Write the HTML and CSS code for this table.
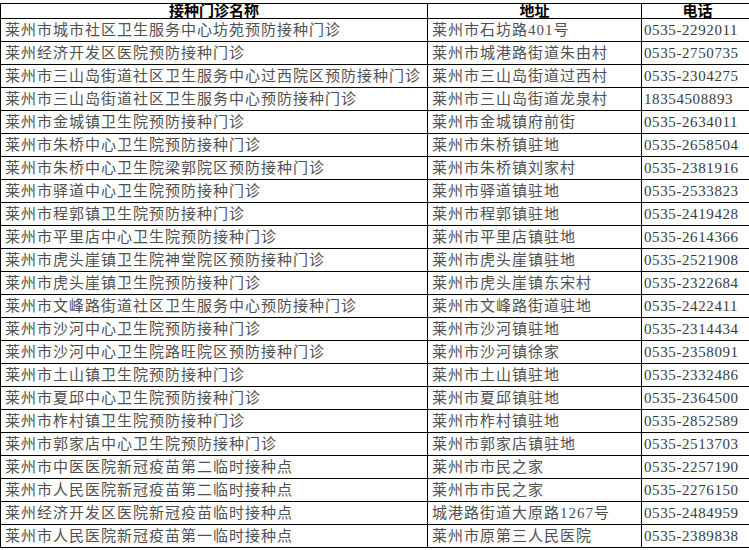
FILE: index.html
```html
<!DOCTYPE html>
<html lang="zh-CN">
<head>
<meta charset="utf-8">
<title>接种门诊</title>
<link rel="stylesheet" href="styles.css">
</head>
<body>
<table class="clinics">
<colgroup>
<col class="c-name">
<col class="c-addr">
<col class="c-tel">
</colgroup>
<thead>
<tr><th>接种门诊名称</th><th>地址</th><th>电话</th></tr>
</thead>
<tbody>
<tr><td>莱州市城市社区卫生服务中心坊苑预防接种门诊</td><td>莱州市石坊路401号</td><td>0535-2292011</td></tr>
<tr><td>莱州经济开发区医院预防接种门诊</td><td>莱州市城港路街道朱由村</td><td>0535-2750735</td></tr>
<tr><td>莱州市三山岛街道社区卫生服务中心过西院区预防接种门诊</td><td>莱州市三山岛街道过西村</td><td>0535-2304275</td></tr>
<tr><td>莱州市三山岛街道社区卫生服务中心预防接种门诊</td><td>莱州市三山岛街道龙泉村</td><td>18354508893</td></tr>
<tr><td>莱州市金城镇卫生院预防接种门诊</td><td>莱州市金城镇府前街</td><td>0535-2634011</td></tr>
<tr><td>莱州市朱桥中心卫生院预防接种门诊</td><td>莱州市朱桥镇驻地</td><td>0535-2658504</td></tr>
<tr><td>莱州市朱桥中心卫生院梁郭院区预防接种门诊</td><td>莱州市朱桥镇刘家村</td><td>0535-2381916</td></tr>
<tr><td>莱州市驿道中心卫生院预防接种门诊</td><td>莱州市驿道镇驻地</td><td>0535-2533823</td></tr>
<tr><td>莱州市程郭镇卫生院预防接种门诊</td><td>莱州市程郭镇驻地</td><td>0535-2419428</td></tr>
<tr><td>莱州市平里店中心卫生院预防接种门诊</td><td>莱州市平里店镇驻地</td><td>0535-2614366</td></tr>
<tr><td>莱州市虎头崖镇卫生院神堂院区预防接种门诊</td><td>莱州市虎头崖镇驻地</td><td>0535-2521908</td></tr>
<tr><td>莱州市虎头崖镇卫生院预防接种门诊</td><td>莱州市虎头崖镇东宋村</td><td>0535-2322684</td></tr>
<tr><td>莱州市文峰路街道社区卫生服务中心预防接种门诊</td><td>莱州市文峰路街道驻地</td><td>0535-2422411</td></tr>
<tr><td>莱州市沙河中心卫生院预防接种门诊</td><td>莱州市沙河镇驻地</td><td>0535-2314434</td></tr>
<tr><td>莱州市沙河中心卫生院路旺院区预防接种门诊</td><td>莱州市沙河镇徐家</td><td>0535-2358091</td></tr>
<tr><td>莱州市土山镇卫生院预防接种门诊</td><td>莱州市土山镇驻地</td><td>0535-2332486</td></tr>
<tr><td>莱州市夏邱中心卫生院预防接种门诊</td><td>莱州市夏邱镇驻地</td><td>0535-2364500</td></tr>
<tr><td>莱州市柞村镇卫生院预防接种门诊</td><td>莱州市柞村镇驻地</td><td>0535-2852589</td></tr>
<tr><td>莱州市郭家店中心卫生院预防接种门诊</td><td>莱州市郭家店镇驻地</td><td>0535-2513703</td></tr>
<tr><td>莱州市中医医院新冠疫苗第二临时接种点</td><td>莱州市市民之家</td><td>0535-2257190</td></tr>
<tr><td>莱州市人民医院新冠疫苗第二临时接种点</td><td>莱州市市民之家</td><td>0535-2276150</td></tr>
<tr><td>莱州经济开发区医院新冠疫苗临时接种点</td><td>城港路街道大原路1267号</td><td>0535-2484959</td></tr>
<tr><td>莱州市人民医院新冠疫苗第一临时接种点</td><td>莱州市原第三人民医院</td><td>0535-2389838</td></tr>
</tbody>
</table>
</body>
</html>
```

FILE: styles.css
```css
html, body {
  margin: 0;
  padding: 0;
  background: #ffffff;
}
body {
  padding-top: 3px;
  overflow: hidden;
}
.clinics {
  border-collapse: collapse;
  table-layout: fixed;
  width: 753px;
  font-family: "Liberation Serif", "Noto Sans CJK SC", serif;
  font-size: 15px;
  letter-spacing: 1px;
  color: #505050;
}
.c-name { width: 427px; }
.c-addr { width: 214px; }
.c-tel { width: 112px; }
.clinics th,
.clinics td {
  border: 1px solid #000;
  padding: 0 0 0 4px;
  white-space: nowrap;
  overflow: hidden;
  vertical-align: middle;
}
.clinics th {
  height: 14px;
  line-height: 14px;
  font-weight: bold;
  color: #000;
  text-align: center;
  letter-spacing: 0;
  padding: 0;
}
.clinics td {
  height: 21px;
  line-height: 21px;
  padding-top: 1px;
  text-align: left;
}
.clinics td:nth-child(3) {
  padding-left: 2px;
  letter-spacing: 0.6px;
  color: #3a3a3a;
}
```
